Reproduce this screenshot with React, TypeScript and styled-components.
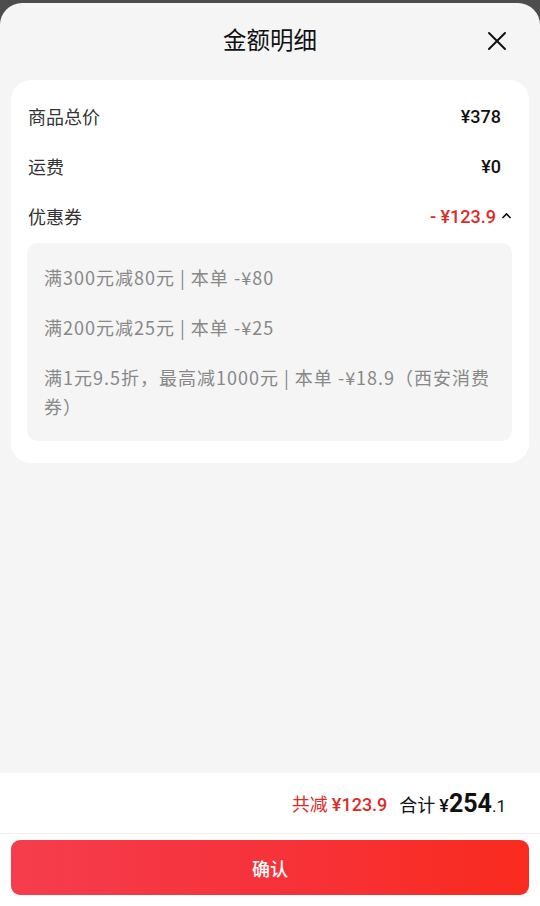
import React from "react";
import styled, { createGlobalStyle } from "styled-components";

const GlobalStyle = createGlobalStyle`
  html, body {
    margin: 0;
    padding: 0;
    background: #4d4d4d;
  }
  body {
    font-family: "Noto Sans CJK SC", "Noto Sans", sans-serif;
    -webkit-font-smoothing: antialiased;
  }
`;

const Page = styled.div`
  height: 906px;
  display: flex;
  flex-direction: column;
  padding-top: 3px;
  box-sizing: border-box;
`;

const Sheet = styled.div`
  flex: 1;
  display: flex;
  flex-direction: column;
  background: #f5f5f5;
  border-radius: 22px 22px 0 0;
  overflow: hidden;
`;

const Header = styled.div`
  height: 77px;
  padding-bottom: 4px;
  box-sizing: border-box;
  display: flex;
  align-items: center;
  justify-content: center;
  position: relative;
`;

const Title = styled.h2`
  margin: 0;
  font-size: 23.5px;
  font-weight: 400;
  color: #111;
  line-height: 1;
`;

const CloseButton = styled.button`
  position: absolute;
  right: 32px;
  top: 27px;
  width: 22px;
  height: 22px;
  padding: 0;
  border: none;
  background: none;
  display: flex;
  align-items: center;
  justify-content: center;
`;

const Card = styled.div`
  margin: 0 11px;
  background: #fff;
  border-radius: 20px;
  padding: 11px 17px 22px 17px;
`;

const Row = styled.div`
  height: 50px;
  display: flex;
  align-items: center;
  justify-content: space-between;
`;

const Label = styled.span`
  font-size: 18px;
  color: #333;
`;

const Value = styled.span<{ $red?: boolean }>`
  display: flex;
  align-items: center;
  gap: 5px;
  margin-right: ${(p) => (p.$red ? "0" : "11px")};
  font-family: Roboto, "Noto Sans CJK SC", sans-serif;
  font-size: 18px;
  font-weight: 500;
  color: ${(p) => (p.$red ? "#de2a26" : "#111")};
`;

const CouponBox = styled.div`
  margin: 2px 0 0 -1px;
  background: #f5f5f5;
  border-radius: 10px;
  padding: 20px 17px;
  display: flex;
  flex-direction: column;
  gap: 21px;
`;

const CouponLine = styled.div`
  font-size: 18px;
  line-height: 29px;
  letter-spacing: 1px;
  color: #888;
`;

const Spacer = styled.div`
  flex: 1;
`;

const Footer = styled.div`
  background: #fff;
`;

const Summary = styled.div`
  height: 60px;
  display: flex;
  align-items: center;
  justify-content: flex-end;
  padding-right: 34px;
  border-bottom: 1px solid #f0f0f0;
  gap: 12px;
`;

const Saved = styled.span`
  font-size: 18px;
  color: #de2a26;
  b {
    font-family: Roboto, "Noto Sans CJK SC", sans-serif;
    font-weight: 500;
  }
`;

const Total = styled.span`
  font-size: 18px;
  color: #111;
  display: flex;
  align-items: baseline;
`;

const Big = styled.span`
  font-family: Roboto, sans-serif;
  font-size: 25px;
  font-weight: 700;
`;

const Small = styled.span`
  font-family: Roboto, sans-serif;
  font-size: 17px;
`;

const Yen = styled.span`
  font-family: Roboto, sans-serif;
  font-weight: 500;
  margin-left: 4px;
`;

const ConfirmButton = styled.button`
  display: block;
  width: calc(100% - 22px);
  margin: 6px 11px 11px;
  height: 55px;
  border: none;
  border-radius: 9px;
  background: linear-gradient(90deg, #f53d4d 0%, #f6323a 50%, #fa2b1e 100%);
  color: #fff;
  font-family: "Noto Sans CJK SC", sans-serif;
  font-size: 18px;
  font-weight: 500;
`;

const coupons = [
  "满300元减80元 | 本单 -¥80",
  "满200元减25元 | 本单 -¥25",
  "满1元9.5折，最高减1000元 | 本单 -¥18.9（西安消费券）",
];

export default function App() {
  return (
    <>
      <GlobalStyle />
      <Page>
        <Sheet>
          <Header>
            <Title>金额明细</Title>
            <CloseButton aria-label="close">
              <svg width="20" height="20" viewBox="0 0 20 20">
                <path d="M2 2 L18 18 M18 2 L2 18" stroke="#111" strokeWidth="2" strokeLinecap="round" />
              </svg>
            </CloseButton>
          </Header>
          <Card>
            <Row>
              <Label>商品总价</Label>
              <Value>¥378</Value>
            </Row>
            <Row>
              <Label>运费</Label>
              <Value>¥0</Value>
            </Row>
            <Row>
              <Label>优惠券</Label>
              <Value $red>
                - ¥123.9
                <svg width="11" height="8" viewBox="0 0 11 8">
                  <path d="M1.5 6 L5.5 2 L9.5 6" stroke="#111" strokeWidth="1.6" fill="none" />
                </svg>
              </Value>
            </Row>
            <CouponBox>
              {coupons.map((c, i) => (
                <CouponLine key={i}>{c}</CouponLine>
              ))}
            </CouponBox>
          </Card>
          <Spacer />
          <Footer>
            <Summary>
              <Saved>
                共减 <b>¥123.9</b>
              </Saved>
              <Total>
                合计<Yen>¥</Yen>
                <Big>254</Big>
                <Small>.1</Small>
              </Total>
            </Summary>
            <ConfirmButton>确认</ConfirmButton>
          </Footer>
        </Sheet>
      </Page>
    </>
  );
}
